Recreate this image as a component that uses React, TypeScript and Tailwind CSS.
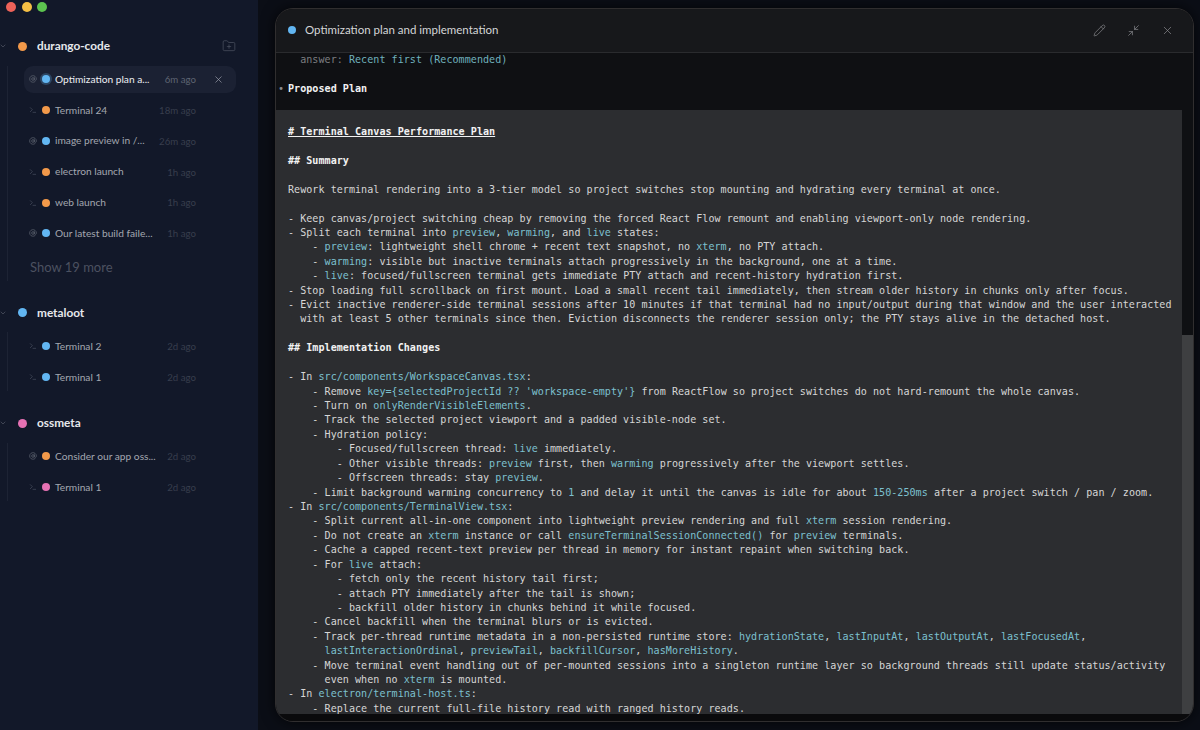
import { ChevronDown, Pencil, Minimize2, X, FolderPlus, AtSign, Terminal } from 'lucide-react';

const ORANGE = 'bg-[#f2994a]';
const BLUE = 'bg-[#62b6f2]';
const PINK = 'bg-[#e672b4]';

type Thread = { kind: 'chat' | 'term'; dot: string; title: string; age: string; active?: boolean };

const projects: { name: string; dot: string; threads: Thread[]; more?: string }[] = [
  {
    name: 'durango-code',
    dot: ORANGE,
    threads: [
      { kind: 'chat', dot: BLUE, title: 'Optimization plan a...', age: '6m ago', active: true },
      { kind: 'term', dot: ORANGE, title: 'Terminal 24', age: '18m ago' },
      { kind: 'chat', dot: BLUE, title: 'image preview in /...', age: '26m ago' },
      { kind: 'term', dot: ORANGE, title: 'electron launch', age: '1h ago' },
      { kind: 'term', dot: ORANGE, title: 'web launch', age: '1h ago' },
      { kind: 'chat', dot: BLUE, title: 'Our latest build faile...', age: '1h ago' },
    ],
    more: 'Show 19 more',
  },
  {
    name: 'metaloot',
    dot: BLUE,
    threads: [
      { kind: 'term', dot: BLUE, title: 'Terminal 2', age: '2d ago' },
      { kind: 'term', dot: BLUE, title: 'Terminal 1', age: '2d ago' },
    ],
  },
  {
    name: 'ossmeta',
    dot: PINK,
    threads: [
      { kind: 'chat', dot: ORANGE, title: 'Consider our app oss...', age: '2d ago' },
      { kind: 'term', dot: PINK, title: 'Terminal 1', age: '2d ago' },
    ],
  },
];

// backticks mark the cyan inline code spans
const plan = [
  '`# Terminal Canvas Performance Plan`',
  '',
  '## Summary',
  '',
  'Rework terminal rendering into a 3-tier model so project switches stop mounting and hydrating every terminal at once.',
  '',
  '- Keep canvas/project switching cheap by removing the forced React Flow remount and enabling viewport-only node rendering.',
  '- Split each terminal into `preview`, `warming`, and `live` states:',
  '    - `preview`: lightweight shell chrome + recent text snapshot, no `xterm`, no PTY attach.',
  '    - `warming`: visible but inactive terminals attach progressively in the background, one at a time.',
  '    - `live`: focused/fullscreen terminal gets immediate PTY attach and recent-history hydration first.',
  '- Stop loading full scrollback on first mount. Load a small recent tail immediately, then stream older history in chunks only after focus.',
  '- Evict inactive renderer-side terminal sessions after 10 minutes if that terminal had no input/output during that window and the user interacted',
  '  with at least 5 other terminals since then. Eviction disconnects the renderer session only; the PTY stays alive in the detached host.',
  '',
  '## Implementation Changes',
  '',
  '- In `src/components/WorkspaceCanvas.tsx`:',
  "    - Remove `key={selectedProjectId ?? 'workspace-empty'}` from ReactFlow so project switches do not hard-remount the whole canvas.",
  '    - Turn on `onlyRenderVisibleElements`.',
  '    - Track the selected project viewport and a padded visible-node set.',
  '    - Hydration policy:',
  '        - Focused/fullscreen thread: `live` immediately.',
  '        - Other visible threads: `preview` first, then `warming` progressively after the viewport settles.',
  '        - Offscreen threads: stay `preview`.',
  '    - Limit background warming concurrency to `1` and delay it until the canvas is idle for about `150-250ms` after a project switch / pan / zoom.',
  '- In `src/components/TerminalView.tsx`:',
  '    - Split current all-in-one component into lightweight preview rendering and full `xterm` session rendering.',
  '    - Do not create an `xterm` instance or call `ensureTerminalSessionConnected()` for `preview` terminals.',
  '    - Cache a capped recent-text preview per thread in memory for instant repaint when switching back.',
  '    - For `live` attach:',
  '        - fetch only the recent history tail first;',
  '        - attach PTY immediately after the tail is shown;',
  '        - backfill older history in chunks behind it while focused.',
  '    - Cancel backfill when the terminal blurs or is evicted.',
  '    - Track per-thread runtime metadata in a non-persisted runtime store: `hydrationState`, `lastInputAt`, `lastOutputAt`, `lastFocusedAt`,',
  '      `lastInteractionOrdinal`, `previewTail`, `backfillCursor`, `hasMoreHistory`.',
  '    - Move terminal event handling out of per-mounted sessions into a singleton runtime layer so background threads still update status/activity',
  '      even when no `xterm` is mounted.',
  '- In `electron/terminal-host.ts`:',
  '    - Replace the current full-file history read with ranged history reads.',
];

function PlanLine({ text }: { text: string }) {
  if (text.startsWith('`#')) {
    return <div className="h-[14.43px] font-bold text-[#f2f2f2] underline">{text.slice(1, -1)}</div>;
  }
  if (text.startsWith('##')) {
    return <div className="h-[14.43px] font-bold text-[#f2f2f2]">{text}</div>;
  }
  const parts = text.split('`');
  return (
    <div className="h-[14.43px]">
      {parts.map((part, i) =>
        i % 2 === 1 ? (
          <span key={i} className="text-[#7cc0cf]">
            {part}
          </span>
        ) : (
          <span key={i}>{part}</span>
        )
      )}
    </div>
  );
}

function ThreadRow({ thread }: { thread: Thread }) {
  return (
    <div
      className={`flex h-[27.8px] w-[212px] items-center rounded-[9px] pl-[2px] ${
        thread.active ? 'bg-[#1b2133]' : ''
      }`}
    >
      <div className="flex w-[14px] shrink-0 justify-center">
        {thread.kind === 'chat' ? (
          <AtSign className="h-[8px] w-[8px] text-[#565b69]" strokeWidth={2.5} />
        ) : (
          <Terminal className="h-[8px] w-[8px] text-[#4a5060]" strokeWidth={2} />
        )}
      </div>
      <div className="flex w-[12px] shrink-0 justify-center">
        <span
          className={`h-[8px] w-[8px] rounded-full ${thread.dot} ${
            thread.active ? 'shadow-[0_0_0_2px_rgba(98,182,242,0.25)]' : ''
          }`}
        />
      </div>
      <div className="ml-[3px] flex w-[141px] shrink-0 items-center justify-between whitespace-nowrap">
        <span className={`text-[10.2px] ${thread.active ? 'text-[#eceef2]' : 'text-[#a3a7b0]'}`}>{thread.title}</span>
        <span className={`text-[9.7px] ${thread.active ? 'text-[#5e6472]' : 'text-[#383e4d]'}`}>{thread.age}</span>
      </div>
      {thread.active && <X className="ml-[17px] h-[11px] w-[11px] text-[#9a9eaa]" strokeWidth={1.5} />}
    </div>
  );
}

function Sidebar() {
  return (
    <aside className="flex w-[258px] shrink-0 flex-col bg-[#121829] font-['Lato',sans-serif]">
      <div className="flex gap-[5.6px] pl-[6px] pt-[2px]">
        <span className="h-[10px] w-[10px] rounded-full bg-[#ee6259]" />
        <span className="h-[10px] w-[10px] rounded-full bg-[#f5bf45]" />
        <span className="h-[10px] w-[10px] rounded-full bg-[#5cc44f]" />
      </div>
      <div className="mt-[26px] flex flex-col gap-[24px]">
        {projects.map((project, idx) => (
          <section key={project.name}>
            <div className="flex h-[16px] items-center">
              <ChevronDown className="-ml-[1px] h-[8px] w-[8px] shrink-0 text-[#565b69]" />
              <span className={`ml-[11px] h-[9px] w-[9px] rounded-full ${project.dot}`} />
              <span className="ml-[10px] text-[11.8px] font-bold text-[#e6e8ec]">{project.name}</span>
              {idx === 0 && <FolderPlus className="ml-auto mr-[22px] h-[14px] w-[14px] text-[#4d5362]" strokeWidth={1.25} />}
            </div>
            <div className="ml-[7px] mt-[11.5px] flex flex-col gap-[3px] border-l border-[#1d2334] pl-[16px]">
              {project.threads.map((thread) => (
                <ThreadRow key={thread.title + thread.age} thread={thread} />
              ))}
              {project.more && <div className="pb-[4px] pl-[6px] pt-[6.7px] text-[13px] leading-[20px] text-[#4c5160]">{project.more}</div>}
            </div>
          </section>
        ))}
      </div>
    </aside>
  );
}

function TerminalWindow() {
  return (
    <div className="flex h-[714px] w-[919px] flex-col overflow-hidden rounded-[18px] border border-[#302e2f] bg-[#0f1013] shadow-[0_0_14px_rgba(0,0,0,0.7)]">
      <header className="flex h-[44px] shrink-0 items-center border-b border-[#2a2b2e] bg-[#17181b] pb-[1px] pl-[12px] pr-[19px]">
        <span className="h-[8px] w-[8px] rounded-full bg-[#62b6f2]" />
        <span className="ml-[9px] font-['Lato',sans-serif] text-[11.5px] text-[#d5d6d8]">Optimization plan and implementation</span>
        <div className="ml-auto flex items-center gap-[21px] text-[#8e8f93]">
          <Pencil className="h-[13px] w-[13px]" strokeWidth={1.25} />
          <Minimize2 className="h-[13px] w-[13px]" strokeWidth={1.25} />
          <X className="h-[13px] w-[13px]" strokeWidth={1.25} />
        </div>
      </header>
      <div className="flex min-h-0 flex-1 whitespace-pre font-['DejaVu_Sans_Mono',monospace] text-[10.07px] leading-[14.43px] tracking-[0.035px] text-[#d6d6d6]">
        <div className="flex min-w-0 flex-1 flex-col">
          <div className="relative h-[57px] shrink-0 pl-[12px]">
            <div className="h-[14.43px]">
              <span className="text-[#7b7d80]">{'  answer: '}</span>
              <span className="text-[#6fb0bd]">Recent first (Recommended)</span>
            </div>
            <div className="h-[14.43px]" />
            <div className="h-[14.43px] font-bold text-[#f2f2f2]">Proposed Plan</div>
            <span className="absolute left-[2px] top-[28.86px] text-[#8a8b8e]">•</span>
          </div>
          <div className="min-h-0 flex-1 overflow-hidden bg-[#2c2d30] pl-[12px] pt-[15px]">
            {plan.map((line, i) => (
              <PlanLine key={i} text={line} />
            ))}
          </div>
        </div>
        <div className="flex w-[11px] shrink-0 flex-col">
          <div className="h-[282px] bg-[#0f1013]" />
          <div className="flex-1 bg-[#3e3f41]" />
        </div>
      </div>
      <div className="h-[7px] shrink-0 bg-[#0a0a0c]" />
    </div>
  );
}

export default function App() {
  return (
    <div className="flex h-[730px] w-[1200px] overflow-hidden bg-[#0b0e16]">
      <Sidebar />
      <main className="flex flex-1 pl-[17px] pt-[8px]">
        <TerminalWindow />
      </main>
    </div>
  );
}
